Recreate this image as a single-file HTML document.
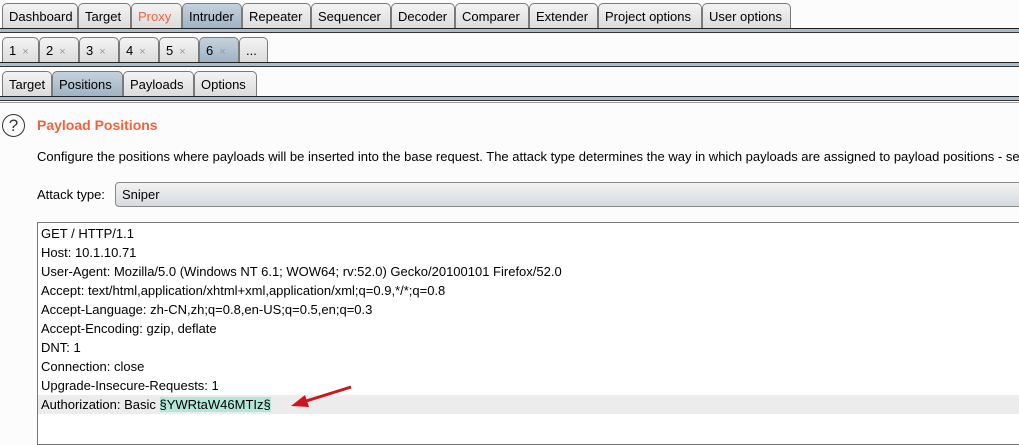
<!DOCTYPE html><html><head><style>
body{margin:0;width:1019px;height:436px;overflow:hidden;background:#fcfcfc;font-family:"Liberation Sans",sans-serif;font-size:13px;color:#000;position:relative}
.row{position:absolute;left:0;width:1019px}
.tab{position:absolute;top:0;height:25px;border:1px solid #7a7a7a;border-bottom:none;border-radius:5px 5px 0 0;background:linear-gradient(#f4f4f4,#dcdcdc);box-sizing:border-box;line-height:25px;padding-left:6px;white-space:nowrap}
.sel{background:linear-gradient(#c4d2dd,#9fb3c4)}
.line{position:absolute;left:0;width:1019px;height:3px;background:#a9bccc;border-top:1px solid #222;border-bottom:1px solid #333;box-sizing:content-box}
.x{color:#999;font-size:11px;margin-left:6px}
.abs{position:absolute}
.req div{height:19px;line-height:19px;padding-left:3px}
</style></head><body>
<div class="row" style="top:3px;height:27px">
<div class="tab" style="left:2px;width:76px">Dashboard</div>
<div class="tab" style="left:78px;width:53px">Target</div>
<div class="tab" style="left:131px;width:51px;color:#f0643c">Proxy</div>
<div class="tab sel" style="left:182px;width:60px">Intruder</div>
<div class="tab" style="left:242px;width:69px">Repeater</div>
<div class="tab" style="left:311px;width:80px">Sequencer</div>
<div class="tab" style="left:391px;width:64px">Decoder</div>
<div class="tab" style="left:455px;width:74px">Comparer</div>
<div class="tab" style="left:529px;width:69px">Extender</div>
<div class="tab" style="left:598px;width:104px">Project options</div>
<div class="tab" style="left:702px;width:89px">User options</div>
</div>
<div class="line" style="top:28px"></div>
<div class="row" style="top:37px;height:26px">
<div class="tab" style="left:2px;width:37px">1<span class="x">×</span></div>
<div class="tab" style="left:39px;width:40px">2<span class="x">×</span></div>
<div class="tab" style="left:79px;width:40px">3<span class="x">×</span></div>
<div class="tab" style="left:119px;width:40px">4<span class="x">×</span></div>
<div class="tab" style="left:159px;width:40px">5<span class="x">×</span></div>
<div class="tab sel" style="left:199px;width:40px">6<span class="x">×</span></div>
<div class="tab" style="left:239px;width:29px">...</div>
</div>
<div class="line" style="top:62px"></div>
<div class="row" style="top:71px;height:26px">
<div class="tab" style="left:2px;width:50px">Target</div>
<div class="tab sel" style="left:52px;width:71px">Positions</div>
<div class="tab" style="left:123px;width:71px">Payloads</div>
<div class="tab" style="left:194px;width:63px">Options</div>
</div>
<div class="line" style="top:96px"></div>
<div class="abs" style="top:102px;left:0;width:1019px;height:1px;background:#999"></div>
<div class="abs" style="left:2px;top:114px;width:21px;height:21px;border:1.5px solid #333;border-radius:50%;text-align:center;line-height:21px;font-size:17px;color:#333">?</div>
<div class="abs" style="left:37px;top:117px;color:#f0643c;font-weight:bold;font-size:14px">Payload Positions</div>
<div class="abs" style="left:37px;top:149px;white-space:nowrap">Configure the positions where payloads will be inserted into the base request. The attack type determines the way in which payloads are assigned to payload positions - see</div>
<div class="abs" style="left:37px;top:187px">Attack type:</div>
<div class="abs" style="left:115px;top:182px;width:910px;height:25px;border:1px solid #888;border-radius:4px;background:linear-gradient(#f2f2f2,#d6dbe0);box-sizing:border-box;line-height:23px;padding-left:6px">Sniper</div>
<div class="abs req" style="left:37px;top:222px;width:990px;height:220px;border:1px solid #777;background:#fff;padding-top:1px">
<div>GET / HTTP/1.1</div><div>Host: 10.1.10.71</div><div>User-Agent: Mozilla/5.0 (Windows NT 6.1; WOW64; rv:52.0) Gecko/20100101 Firefox/52.0</div><div>Accept: text/html,application/xhtml+xml,application/xml;q=0.9,*/*;q=0.8</div><div>Accept-Language: zh-CN,zh;q=0.8,en-US;q=0.5,en;q=0.3</div><div>Accept-Encoding: gzip, deflate</div><div>DNT: 1</div><div>Connection: close</div><div>Upgrade-Insecure-Requests: 1</div><div style="background:#ececec">Authorization: Basic <span style="background:#b3e8d8">§YWRtaW46MTIz§</span></div>
</div>
<svg class="abs" style="left:285px;top:383px" width="70" height="30"><line x1="66" y1="4" x2="18" y2="19" stroke="#d0141e" stroke-width="3"/><polygon points="6,23 20,12 24,24" fill="#d0141e"/></svg>
</body></html>
